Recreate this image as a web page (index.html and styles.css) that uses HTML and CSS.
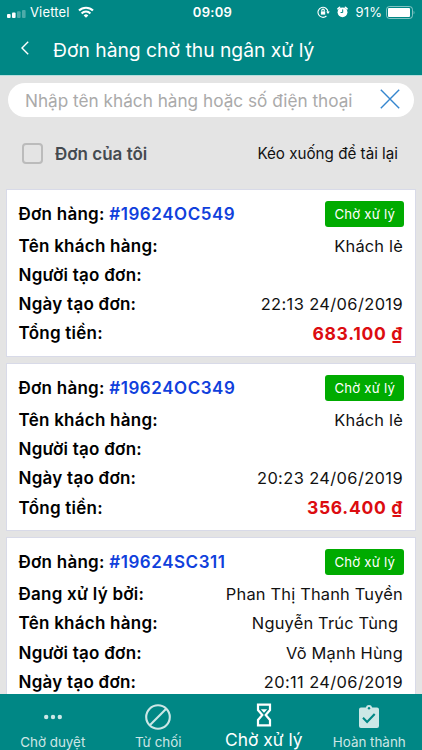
FILE: index.html
```
<!DOCTYPE html>
<html lang="vi">
<head>
    <meta charset="UTF-8">
    <meta name="viewport" content="width=device-width, initial-scale=1.0">
    <title>Đơn hàng chờ thu ngân xử lý</title>
    <link rel="stylesheet" href="styles.css">
</head>
<body>
    <header class="header">
        <div class="status-bar">
            <div class="status-left">
                <svg class="signal" width="19" height="8" viewBox="0 0 19 8" fill="#fff">
                    <rect x="0" y="4" width="3.6" height="4" rx="1"/>
                    <rect x="5" y="2.6" width="3.6" height="5.4" rx="1"/>
                    <rect x="10" y="1.3" width="3.6" height="6.7" rx="1" opacity=".3"/>
                    <rect x="15" y="0" width="3.6" height="8" rx="1" opacity=".3"/>
                </svg>
                <span class="carrier">Viettel</span>
                <svg class="wifi" width="16" height="12" viewBox="0 0 16 12" fill="none" stroke="#fff" stroke-width="2.1">
                    <path d="M1 4.6a10 10 0 0 1 14 0"/>
                    <path d="M3.6 7.4a6.2 6.2 0 0 1 8.8 0"/>
                    <path d="M8 11.8l-2.3-2.4a3.3 3.3 0 0 1 4.6 0z" fill="#fff" stroke="none"/>
                </svg>
            </div>
            <span class="clock">09:09</span>
            <div class="status-right">
                <svg class="lock" width="13" height="12" viewBox="0 0 13 12" fill="none" stroke="#fff" stroke-width="1.1">
                    <path d="M9.4 10A5 5 0 1 1 11 6"/>
                    <path d="M9.2 5.6h3.6L11 8z" fill="#fff" stroke="none"/>
                    <rect x="3.9" y="5.4" width="4.3" height="3.2" fill="#fff" stroke="none"/>
                    <path d="M4.8 5.6V4.4a1.25 1.25 0 0 1 2.5 0v1.2"/>
                </svg>
                <svg class="alarm" width="11" height="12" viewBox="0 0 11 12">
                    <circle cx="5.5" cy="6.3" r="4.9" fill="#fff"/>
                    <path d="M.9 2.8l1.7-1.5M10.1 2.8L8.4 1.3" stroke="#fff" stroke-width="1.6" stroke-linecap="round"/>
                    <path d="M5.7 3.4v3.1H3.6" stroke="#008785" fill="none"/>
                </svg>
                <span class="percent">91%</span>
                <svg class="battery" width="29" height="13" viewBox="0 0 29 13">
                    <rect x=".5" y=".5" width="26" height="12" rx="3" fill="none" stroke="#fff" opacity=".5"/>
                    <rect x="2" y="2" width="22" height="9" rx="1" fill="#fff"/>
                    <path d="M27.6 4.7c1.2.5 1.2 3.1 0 3.6z" fill="#fff" opacity=".5"/>
                </svg>
            </div>
        </div>
        <div class="title-bar">
            <svg class="back" width="8" height="14" viewBox="0 0 8 14" fill="none" stroke="#fff" stroke-width="1.4">
                <path d="M7.2.8L1 7l6.2 6.2"/>
            </svg>
            <h1 class="title">Đơn hàng chờ thu ngân xử lý</h1>
        </div>
    </header>

    <main class="content">
        <div class="search">
            <span class="placeholder">Nhập tên khách hàng hoặc số điện thoại</span>
            <svg width="20" height="20" viewBox="0 0 20 20" stroke="#3586cf" stroke-width="1.4">
                <path d="M.8.8l18.4 18.4M19.2.8L.8 19.2"/>
            </svg>
        </div>
        <div class="filter">
            <span class="checkbox"></span>
            <span class="mine">Đơn của tôi</span>
            <span class="hint">Kéo xuống để tải lại</span>
        </div>

        <section class="card">
            <div class="row row-top"><b>Đơn hàng: <span class="code">#19624OC549</span></b><span class="badge">Chờ xử lý</span></div>
            <div class="row"><b>Tên khách hàng:</b><span>Khách lẻ</span></div>
            <div class="row"><b>Người tạo đơn:</b></div>
            <div class="row"><b>Ngày tạo đơn:</b><span class="date">22:13 24/06/2019</span></div>
            <div class="row"><b>Tổng tiền:</b><span class="total">683.100 ₫</span></div>
        </section>

        <section class="card">
            <div class="row row-top"><b>Đơn hàng: <span class="code">#19624OC349</span></b><span class="badge">Chờ xử lý</span></div>
            <div class="row"><b>Tên khách hàng:</b><span>Khách lẻ</span></div>
            <div class="row"><b>Người tạo đơn:</b></div>
            <div class="row"><b>Ngày tạo đơn:</b><span class="date">20:23 24/06/2019</span></div>
            <div class="row"><b>Tổng tiền:</b><span class="total">356.400 ₫</span></div>
        </section>

        <section class="card">
            <div class="row row-top"><b>Đơn hàng: <span class="code">#19624SC311</span></b><span class="badge">Chờ xử lý</span></div>
            <div class="row"><b>Đang xử lý bởi:</b><span>Phan Thị Thanh Tuyền</span></div>
            <div class="row"><b>Tên khách hàng:</b><span>Nguyễn Trúc Tùng&nbsp;</span></div>
            <div class="row"><b>Người tạo đơn:</b><span>Võ Mạnh Hùng</span></div>
            <div class="row"><b>Ngày tạo đơn:</b><span class="date">20:11 24/06/2019</span></div>
        </section>
    </main>

    <nav class="tabs">
        <div class="tab">
            <svg width="26" height="26" viewBox="0 0 26 26" fill="#fff">
                <circle cx="6.2" cy="13" r="2.2"/>
                <circle cx="13" cy="13" r="2.2"/>
                <circle cx="19.8" cy="13" r="2.2"/>
            </svg>
            <span>Chờ duyệt</span>
        </div>
        <div class="tab">
            <svg width="26" height="26" viewBox="0 0 26 26" fill="none" stroke="#fff" stroke-width="2.1">
                <circle cx="13" cy="13" r="11.8"/>
                <path d="M4.8 21.2L21.2 4.8"/>
            </svg>
            <span>Từ chối</span>
        </div>
        <div class="tab active">
            <svg width="16" height="26" viewBox="0 0 16 26" fill="none" stroke="#fff" stroke-width="2.2">
                <path d="M2 2.6h12V8l-4.3 5 4.3 5v5.4H2V18l4.3-5L2 8z"/>
                <path d="M4.8 7.2h6.4L8 10.8z" fill="#fff" stroke="none"/>
            </svg>
            <span>Chờ xử lý</span>
        </div>
        <div class="tab">
            <svg width="22" height="26" viewBox="0 0 22 26">
                <path d="M3 3.5h4.8a3.3 3.3 0 0 1 6.4 0H19a2 2 0 0 1 2 2V22a2 2 0 0 1-2 2H3a2 2 0 0 1-2-2V5.5a2 2 0 0 1 2-2z" fill="#fff"/>
                <circle cx="11" cy="4.2" r="1.2" fill="#008785"/>
                <path d="M5 13.8l4.1 4.1 7.6-7.9" fill="none" stroke="#008785" stroke-width="2.1"/>
            </svg>
            <span>Hoàn thành</span>
        </div>
    </nav>
</body>
</html>
```
FILE: styles.css
```
* { box-sizing: border-box; }
body {
    margin: 0;
    height: 750px;
    display: flex;
    flex-direction: column;
    overflow: hidden;
    font-family: Inter, "Noto Sans", sans-serif;
    font-size: 16.4px;
    color: #111;
    background: #e4e4e4;
}
svg { display: block; flex: none; }
.header {
    flex: none;
    height: 76px;
    color: #fff;
    background: #008785;
    border-bottom: 1px solid #b5dddd;
}
.status-bar {
    height: 24px;
    padding: 0 7px;
    display: grid;
    grid-template-columns: 1fr auto 1fr;
    align-items: center;
    font-size: 13px;
}
.status-left, .status-right { display: flex; align-items: center; }
.status-right { justify-content: flex-end; }
.signal { margin-top: 3px; }
.carrier { margin: 0 8px 0 4px; letter-spacing: 0.15px; }
.clock { padding-left: 3px; font-weight: 600; letter-spacing: 0.3px; }
.lock { margin-right: -1px; }
.alarm { margin: 0 8px; }
.percent { margin-right: 4px; letter-spacing: 0.1px; }
.title-bar {
    height: 51px;
    padding-left: 21px;
    display: flex;
    align-items: center;
}
.back { margin-top: -3px; }
.title {
    margin: 0 0 0 24px;
    font-size: 19.3px;
    font-weight: 400;
}
.content {
    flex: 1;
    min-height: 0;
    overflow: hidden;
    padding: 7px 6px 0;
}
.search {
    height: 34px;
    margin: 0 2px;
    padding: 0 14px 0 17px;
    display: flex;
    align-items: center;
    justify-content: space-between;
    border-radius: 17px;
    background: #fff;
}
.search svg { margin-top: -3px; }
.placeholder { font-size: 17.2px; color: #aaa; }
.filter {
    height: 72px;
    padding: 0 18px 0 16px;
    display: flex;
    align-items: center;
}
.checkbox {
    width: 21px;
    height: 21px;
    border: 2px solid #bbb;
    border-radius: 4px;
}
.mine {
    margin-left: 12px;
    padding-top: 2px;
    font-size: 17px;
    font-weight: 600;
    color: #444a50;
}
.hint { margin-left: auto; padding-top: 1px; font-size: 15.2px; }
.card {
    height: 168px;
    margin-bottom: 6.2px;
    padding: 8px 12px 0 11.5px;
    border: 1px solid #d8dae8;
    background: #fff;
}
.row {
    height: 29.3px;
    display: flex;
    align-items: center;
    justify-content: space-between;
    white-space: nowrap;
    letter-spacing: 0.2px;
}
.row-top { height: 32px; margin-bottom: 0.9px; }
.row b {
    font-size: 17px;
    font-weight: 600;
    letter-spacing: 0.25px;
    color: #000;
}
.row .code { letter-spacing: 0.55px; color: #1040dc; }
.row .date { letter-spacing: 0.4px; }
.row .badge {
    height: 26px;
    margin-right: -1px;
    padding: 0 9px;
    font-size: 13.2px;
    line-height: 26px;
    border-radius: 3px;
    color: #fff;
    background: #00ab00;
}
.row .total {
    font-size: 17.5px;
    font-weight: 700;
    letter-spacing: 0.7px;
    color: #dc0c10;
}
.tabs {
    flex: none;
    height: 56px;
    display: flex;
    color: #fff;
    background: #008785;
}
.tab {
    flex: 1;
    padding-top: 10px;
    display: flex;
    flex-direction: column;
    align-items: center;
    font-size: 13.4px;
    line-height: 20px;
    opacity: 0.8;
    white-space: nowrap;
}
.tab svg { height: 26px; }
.tab span { margin-top: 2px; }
.active { padding-top: 8px; font-size: 17.4px; opacity: 1; }
```
